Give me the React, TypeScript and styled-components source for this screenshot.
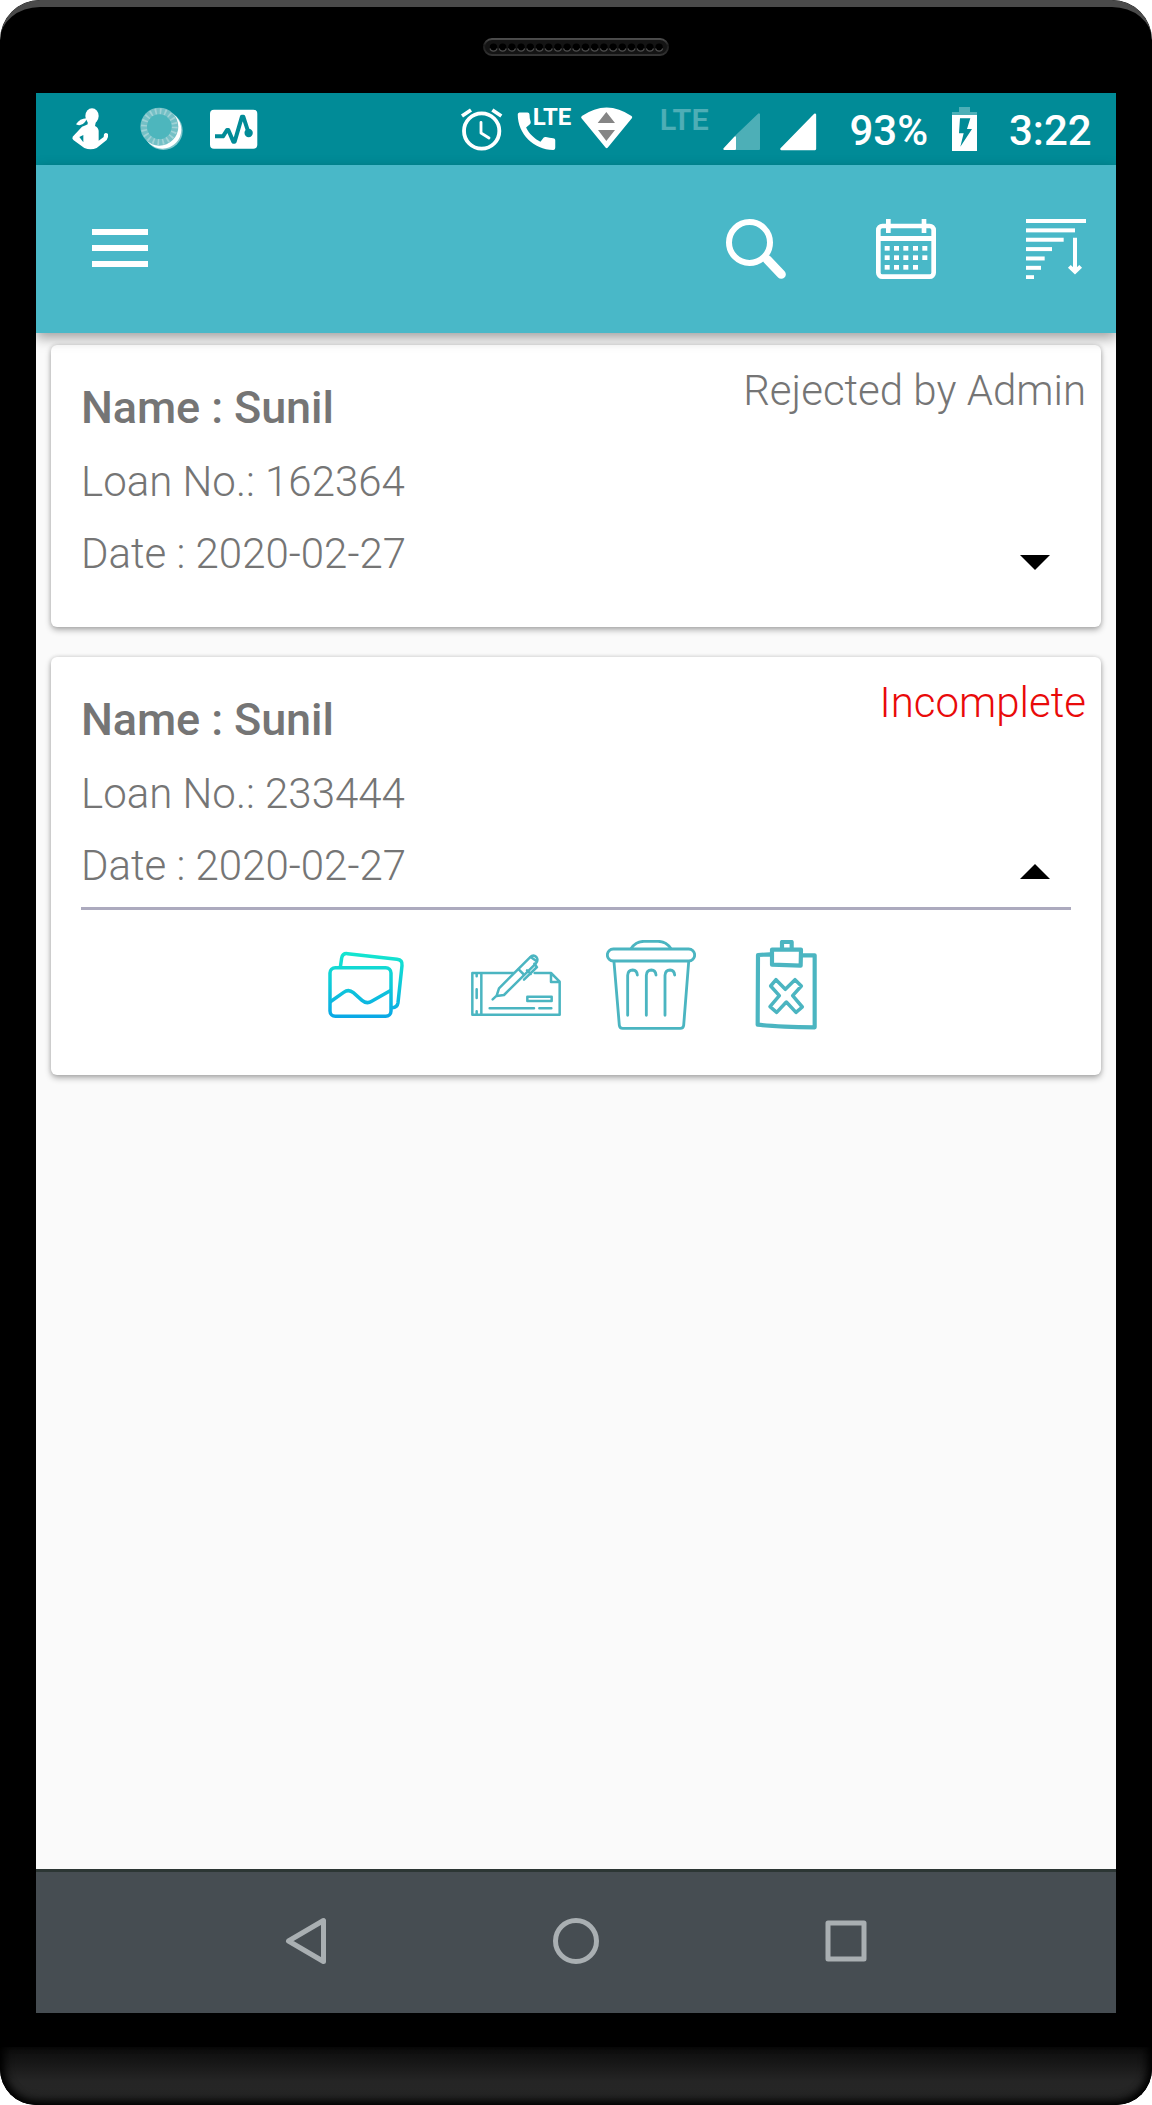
import React from "react";
import styled, { createGlobalStyle } from "styled-components";

const TEAL = "#49b8c8";
const TEAL_DARK = "#018b97";
const ICON_TEAL = "#4bb5c1";

const GlobalStyle = createGlobalStyle`
  * { box-sizing: border-box; }
  body { margin: 0; background: #fff; font-family: Roboto, "Noto Sans", sans-serif; }
  svg { display: block; flex: none; }
`;

/* ---------- device ---------- */
const Phone = styled.div`
  width: 1152px;
  height: 2105px;
  display: flex;
  flex-direction: column;
  align-items: center;
  background: #000;
  border-radius: 40px 40px 36px 36px;
  overflow: hidden;
`;
const TopBezel = styled.div`
  width: 100%;
  height: 93px;
  flex: none;
  display: flex;
  justify-content: center;
  padding-top: 31px;
  border-top: 7px solid #4a4a4a;
  border-radius: 40px 40px 0 0;
`;
const Chin = styled.div`
  width: 100%;
  height: 58px;
  margin-top: 34px;
  flex: none;
  border-radius: 0 0 36px 36px;
  background: linear-gradient(#0c0c0c 0, #171717 16px, #252525 34px, #262626 100%);
  box-shadow: inset 0 -6px 10px -2px #000, inset 8px 0 10px -4px #000, inset -8px 0 10px -4px #000;
`;
const Screen = styled.div`
  width: 1080px;
  height: 1920px;
  flex: none;
  display: flex;
  flex-direction: column;
  background: #fafafa;
  overflow: hidden;
`;

/* ---------- status bar ---------- */
const StatusBar = styled.div`
  height: 72px;
  flex: none;
  display: flex;
  justify-content: space-between;
  background: ${TEAL_DARK};
`;
const StatusGroup = styled.div<{ $start?: number }>`
  display: flex;
  align-items: flex-start;
  padding-left: ${(p) => p.$start ?? 0}px;
`;
const StatusIcon = styled.svg<{ $gap?: number }>`
  height: 72px;
  margin-left: ${(p) => p.$gap ?? 0}px;
`;
const StatusText = styled.span<{ $gap: number; $width: number }>`
  width: ${(p) => p.$width}px;
  margin-left: ${(p) => p.$gap}px;
  font-size: 42px;
  font-weight: 500;
  line-height: 76px;
  color: #fff;
  white-space: nowrap;
`;

/* ---------- app bar ---------- */
const AppBar = styled.header`
  height: 168px;
  flex: none;
  display: flex;
  align-items: flex-start;
  justify-content: space-between;
  padding: 54px 30px 0 56px;
  background: ${TEAL};
  box-shadow: 0 5px 12px rgba(0, 0, 0, 0.36);
  z-index: 1;
`;
const MenuButton = styled.div`
  width: 56px;
  display: flex;
  flex-direction: column;
  gap: 10px;
  padding-top: 10px;
`;
const MenuLine = styled.i`
  height: 6px;
  background: #fff;
`;
const Tools = styled.div`
  display: flex;
  gap: 90px;
`;

/* ---------- list ---------- */
const List = styled.main`
  flex: 1;
  display: flex;
  flex-direction: column;
  gap: 30px;
  padding: 12px 15px;
`;
const Card = styled.article<{ $height: number }>`
  height: ${(p) => p.$height}px;
  flex: none;
  border-radius: 6px;
  background: #fff;
  box-shadow: 0 3px 6px rgba(0, 0, 0, 0.3), 0 0 4px rgba(0, 0, 0, 0.14);
`;
const Summary = styled.div`
  height: 250px;
  display: flex;
  justify-content: space-between;
`;
const Details = styled.div`
  padding: 36px 0 0 30px;
  color: #757575;
`;
const Name = styled.div`
  margin-bottom: 11px;
  font-size: 45px;
  line-height: 53px;
  font-weight: 500;
  letter-spacing: -0.1px;
`;
const Field = styled.div`
  font-size: 42px;
  line-height: 73px;
  font-weight: 300;

  & + & {
    line-height: 72px;
  }
`;
const Side = styled.div`
  display: flex;
  flex-direction: column;
  align-items: flex-end;
  padding-top: 21px;
`;
const Status = styled.div<{ $color: string }>`
  height: 49px;
  margin: 0 15px 110px 0;
  font-size: 42px;
  line-height: 49px;
  font-weight: 300;
  color: ${(p) => p.$color};
`;
const Toggle = styled.div`
  margin-right: 30px;
`;
const Divider = styled.div`
  height: 3px;
  margin: 0 30px;
  background: #acaabe;
`;
const Actions = styled.div`
  display: flex;
  gap: 45px;
  padding: 30px 0 0 270px;
`;
const Action = styled.svg<{ $after?: number }>`
  width: 90px;
  height: 90px;
  margin-right: ${(p) => p.$after ?? 0}px;
  fill: none;
  stroke: ${ICON_TEAL};
  stroke-linecap: round;
  stroke-linejoin: round;
`;

/* ---------- navigation bar ---------- */
const NavBar = styled.nav`
  height: 144px;
  flex: none;
  display: flex;
  justify-content: center;
  align-items: flex-start;
  gap: 198px;
  padding-top: 33px;
  border-top: 3px solid #2c3634;
  background: #464d52;
`;
const NavIcon = styled.svg`
  width: 72px;
  height: 72px;
  fill: none;
  stroke: #a9afb2;
  stroke-width: 5;
  stroke-linejoin: round;
`;

const Speaker = () => (
  <svg width="186" height="18" viewBox="0 0 186 18">
    <defs>
      <linearGradient id="spk" x1="0" y1="0" x2="0" y2="1">
        <stop offset="0" stopColor="#4c4c4c" />
        <stop offset="0.4" stopColor="#1c1c1c" />
        <stop offset="1" stopColor="#333" />
      </linearGradient>
    </defs>
    <rect x="1" y="1" width="184" height="16" rx="8" fill="#141414" stroke="url(#spk)" strokeWidth="2" />
    {Array.from({ length: 19 }, (_, i) => {
      const x = 10.5 + i * 9.2;
      return (
        <g key={i}>
          <circle cx={x} cy="9.3" r="3.7" fill="#000" />
          <path d={`M${x - 3.6} 10.5a3.8 3.8 0 0 0 7.2 0`} fill="none" stroke="#4e4e4e" strokeWidth="1.1" />
        </g>
      );
    })}
  </svg>
);

const Notifications = () => (
  <StatusGroup $start={35}>
    <StatusIcon width="39" viewBox="213 279 117 216" fill="#fff">
      <ellipse cx="276" cy="348" rx="20" ry="23" />
      <path d="M262 355Q240 354 228 373Q244 381 255 366Z" />
      <path
        fillRule="evenodd"
        d="M263 363V373Q256 377 246 380L218 410Q215 416 221 421L253 444Q272 452 290 444L320 420Q326 412 324 402Q317 395 312 403L311 411L296 422L296 392Q294 381 285 378L288 363ZM238 411L250 405V427Z"
      />
    </StatusIcon>
    <StatusIcon $gap={29.3} width="45" viewBox="418 279 135 216">
      <circle cx="491" cy="392" r="58" fill="#fff" opacity="0.5" />
      <circle cx="488" cy="389" r="57" fill="#fff" />
      <circle cx="479" cy="380" r="57" fill="#74c0c6" />
      <circle cx="479" cy="380" r="46" fill="none" stroke="#9fd2d6" strokeWidth="18" strokeDasharray="5 9.45" />
      <circle cx="479" cy="380" r="37" fill="#4db6bd" />
    </StatusIcon>
    <StatusIcon $gap={25} width="49.3" viewBox="628 279 148 216">
      <rect x="631" y="329" width="142" height="117" rx="12" fill="#fff" />
      <path
        d="M646 409H670L682 390H686L701 425H705L727 350H731L746 396"
        fill="none"
        stroke={TEAL_DARK}
        strokeWidth="12"
        strokeLinejoin="round"
      />
      <circle cx="747" cy="399" r="12.5" fill={TEAL_DARK} />
    </StatusIcon>
  </StatusGroup>
);

const SystemStatus = () => (
  <StatusGroup>
    <StatusIcon width="44" viewBox="60 39 132 216" fill="none" stroke="#fff" strokeLinecap="round" strokeLinejoin="round">
      <circle cx="125" cy="153" r="53" strokeWidth="11.5" />
      <path d="M123 127V159L147 174" strokeWidth="8.5" />
      <path d="M66 108L93 90M184 108L157 90" strokeWidth="11" strokeLinecap="butt" />
    </StatusIcon>
    <StatusIcon $gap={12} width="56" viewBox="228 39 168 216" fill="#fff">
      <path
        transform="translate(214.5 78.5) scale(6.25)"
        d="M20.01 15.38c-1.23 0-2.42-.2-3.53-.56a.977.977 0 0 0-1.01.24l-1.57 1.97c-2.83-1.35-5.48-3.9-6.89-6.83l1.95-1.66c.27-.28.35-.67.24-1.02-.37-1.11-.56-2.3-.56-3.53 0-.54-.45-.99-.99-.99H4.19C3.65 3 3 3.24 3 3.99 3 13.28 10.73 21 20.01 21c.71 0 .99-.63.99-1.18v-3.45c0-.54-.45-.99-.99-.99z"
      />
      <text x="278" y="135" fontSize="69" fontWeight="700" textLength="116" lengthAdjust="spacingAndGlyphs">LTE</text>
    </StatusIcon>
    <StatusIcon $gap={8} width="53" viewBox="420 39 159 216">
      <path d="M428 112Q500 62 572 112L500 200Z" fill="#fff" stroke="#fff" strokeWidth="9" strokeLinejoin="round" />
      <path d="M473 129H525L499 96ZM474 150H525L499 183Z" fill="#858585" />
    </StatusIcon>
    <StatusIcon $gap={27} width="49" viewBox="660 39 147 216">
      <text x="659" y="151" fontSize="90" fontWeight="600" fill="#fff" opacity="0.3" textLength="147" lengthAdjust="spacingAndGlyphs">LTE</text>
    </StatusIcon>
    <StatusIcon $gap={13} width="39" viewBox="846 39 117 216" strokeLinejoin="round" strokeWidth="6">
      <path d="M888 169L957 103V207H888Z" fill="#4dafb7" stroke="#4dafb7" />
      <path d="M853 207L885 172V207Z" fill="#fff" stroke="#fff" />
    </StatusIcon>
    <StatusIcon $gap={18} width="38" viewBox="-3 39 114 216">
      <path d="M4 207L105 104V207Z" fill="#fff" stroke="#fff" strokeWidth="7" strokeLinejoin="round" />
    </StatusIcon>
    <StatusText $gap={32.5} $width={101.5}>93%</StatusText>
    <StatusIcon width="27" viewBox="513 39 81 216">
      <path d="M537 81H570V96H591V106H516V96H537Z" fill="#4dafb7" />
      <rect x="516" y="105" width="75" height="108" fill="#fff" />
      <path d="M540 115H571L561 147H576L541 200L551 160H537Z" fill={TEAL_DARK} />
    </StatusIcon>
    <StatusText $gap={31} $width={107}>3:22</StatusText>
  </StatusGroup>
);

const SearchIcon = () => (
  <svg width="60" height="60" viewBox="138 87 180 180" fill="none" stroke="#fff">
    <circle cx="208.5" cy="157.5" r="61.5" strokeWidth="18" />
    <path d="M262 209L304 253" strokeWidth="27" strokeLinecap="round" />
  </svg>
);

const CalendarIcon = () => (
  <svg width="60" height="60" viewBox="588 87 180 180" fill="#fff">
    <rect x="595" y="108" width="166" height="152" rx="12" fill="none" stroke="#fff" strokeWidth="14" />
    <rect x="595" y="138" width="166" height="15" />
    <rect x="618" y="87" width="14" height="42" />
    <rect x="725" y="87" width="14" height="42" />
    {[168, 196, 225].map((y, row) =>
      [614, 642, 670, 699, 727].slice(0, row === 2 ? 4 : 5).map((x) => <rect key={`${x}-${y}`} x={x} y={y} width="15" height="14" />)
    )}
  </svg>
);

const SortIcon = () => (
  <svg width="60" height="60" viewBox="1038 87 180 180" fill="#fff">
    {[180, 147, 113, 78, 56, 45, 24].map((w, i) => (
      <rect key={w} x="1038" y={87 + i * 28.1} width={w} height="12" />
    ))}
    <path d="M1185 143V245M1168 229L1185 245L1202 229" fill="none" stroke="#fff" strokeWidth="12" />
  </svg>
);

const GalleryIcon = () => (
  <Action viewBox="63 120 270 270" $after={15}>
    <defs>
      <linearGradient id="gal" gradientUnits="userSpaceOnUse" x1="0" y1="157" x2="0" y2="352">
        <stop offset="0" stopColor="#14e6cf" />
        <stop offset="0.5" stopColor="#0fcad9" />
        <stop offset="1" stopColor="#0aa8e6" />
      </linearGradient>
    </defs>
    <g stroke="url(#gal)" strokeWidth="10.5" strokeLinecap="butt">
      <rect x="90" y="203" width="183" height="146" rx="16" />
      <path d="M121 202L125 174Q128 159 143 161L291 178Q308 180 306 197L294 308Q292 322 276 323" />
      <path d="M90 306L131 277Q146 266 160 278L186 301Q200 313 215 304L273 271" />
    </g>
  </Action>
);

const ChequeIcon = () => (
  <Action viewBox="513 120 270 270" strokeWidth="7.5">
    <path d="M640 219H517V344H779V245L753 219H704M753 219V246H779M544 219V344" />
    <path d="M530 222V229M530 268V294M530 334V341M569 325H702M718 325H754" />
    <rect x="682" y="290" width="73" height="13" />
    <path d="M578 298L590 287L597 265L690 172Q700 162 709 171Q716 180 708 190L612 285L590 288" />
    <path d="M656 208L670 222M692 171L709 183M711 201L672 239M681 211L692 222M703 191L709 199" />
  </Action>
);

const TrashIcon = () => (
  <Action viewBox="108 120 270 270" strokeWidth="8.5">
    <rect x="112" y="147" width="262" height="36" rx="18" />
    <path d="M184 145Q198 124 222 124H264Q288 124 302 145M132 186L148 376Q149 385 158 385H331Q340 385 341 376L356 186" />
    {[0, 56, 112].map((dx) => (
      <path key={dx} d={`M${173 + dx} 346V226Q${174 + dx} 210 ${188 + dx} 210Q${201 + dx} 211 ${202 + dx} 225`} />
    ))}
  </Action>
);

const ClipboardIcon = () => (
  <Action viewBox="513 120 270 270" strokeWidth="12.5">
    <path d="M600 163L564 165L563 374Q620 381 734 382V166H700M606 149H693L692 197L606 194ZM636 146V126H665V146" />
    <path
      strokeWidth="10.5"
      d="M618 239L646 268L675 239L694 258L668 287L697 321L678 337L649 306L620 337L600 320L628 287L602 258Z"
    />
  </Action>
);

type Loan = { loanNo: string; date: string; status: string; color: string; open: boolean };

const loans: Loan[] = [
  { loanNo: "162364", date: "2020-02-27", status: "Rejected by Admin", color: "#757575", open: false },
  { loanNo: "233444", date: "2020-02-27", status: "Incomplete", color: "#e90a0a", open: true },
];

const LoanCard = ({ loan }: { loan: Loan }) => (
  <Card $height={loan.open ? 418 : 282}>
    <Summary>
      <Details>
        <Name>Name : Sunil</Name>
        <Field>Loan No.: {loan.loanNo}</Field>
        <Field>Date : {loan.date}</Field>
      </Details>
      <Side>
        <Status $color={loan.color}>{loan.status}</Status>
        <Toggle>
          <svg width="72" height="72" viewBox="0 0 24 24">
            <path d={loan.open ? "M7 14l5-5 5 5z" : "M7 10l5 5 5-5z"} />
          </svg>
        </Toggle>
      </Side>
    </Summary>
    {loan.open && (
      <>
        <Divider />
        <Actions>
          <GalleryIcon />
          <ChequeIcon />
          <TrashIcon />
          <ClipboardIcon />
        </Actions>
      </>
    )}
  </Card>
);

export default function App() {
  return (
    <>
      <GlobalStyle />
      <Phone>
        <TopBezel>
          <Speaker />
        </TopBezel>
        <Screen>
          <StatusBar>
            <Notifications />
            <SystemStatus />
          </StatusBar>
          <AppBar>
            <MenuButton>
              <MenuLine />
              <MenuLine />
              <MenuLine />
            </MenuButton>
            <Tools>
              <SearchIcon />
              <CalendarIcon />
              <SortIcon />
            </Tools>
          </AppBar>
          <List>
            {loans.map((loan) => (
              <LoanCard key={loan.loanNo} loan={loan} />
            ))}
          </List>
          <NavBar>
            <NavIcon viewBox="0 0 72 72">
              <path d="M53.5 15.5V56.5L18.5 36Z" />
            </NavIcon>
            <NavIcon viewBox="0 0 72 72">
              <circle cx="36" cy="36" r="20.5" />
            </NavIcon>
            <NavIcon viewBox="0 0 72 72">
              <rect x="18" y="18" width="36" height="36" />
            </NavIcon>
          </NavBar>
        </Screen>
        <Chin />
      </Phone>
    </>
  );
}
